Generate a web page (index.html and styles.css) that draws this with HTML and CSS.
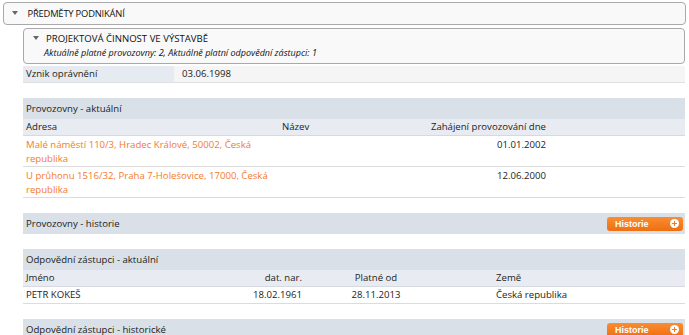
FILE: index.html
```html
<!DOCTYPE html>
<html>
<head>
  <title>Předměty podnikání</title>
  <link rel="stylesheet" href="styles.css">
</head>
<body>
  <div class="panel-head">
    <span class="caret"></span>
    <span class="panel-title">PŘEDMĚTY PODNIKÁNÍ</span>
  </div>

  <div class="panel-body">
    <div class="sub-head">
      <div class="sub-title"><span class="caret"></span>PROJEKTOVÁ ČINNOST VE VÝSTAVBĚ</div>
      <div class="sub-note">Aktuálně platné provozovny: 2, Aktuálně platní odpovědní zástupci: 1</div>
    </div>

    <div class="info-row">
      <div class="info-label">Vznik oprávnění</div>
      <div class="info-value">03.06.1998</div>
    </div>

    <!-- Provozovny - aktualni -->
    <div class="section">
      <div class="section-head">Provozovny - aktuální</div>
      <div class="grid grid-prov col-head">
        <div>Adresa</div>
        <div>Název</div>
        <div class="right">Zahájení provozování dne</div>
        <div></div>
      </div>
      <div class="grid grid-prov data-row">
        <div class="link">Malé náměstí 110/3, Hradec Králové, 50002, Česká republika</div>
        <div></div>
        <div class="right">01.01.2002</div>
        <div></div>
      </div>
      <div class="grid grid-prov data-row">
        <div class="link">U průhonu 1516/32, Praha 7-Holešovice, 17000, Česká republika</div>
        <div></div>
        <div class="right">12.06.2000</div>
        <div></div>
      </div>
    </div>

    <div class="section">
      <div class="section-head">
        <span>Provozovny - historie</span>
        <span class="btn-history">Historie<span class="btn-plus"></span></span>
      </div>
    </div>

    <!-- Odpovedni zastupci - aktualni -->
    <div class="section">
      <div class="section-head">Odpovědní zástupci - aktuální</div>
      <div class="grid grid-rep col-head">
        <div>Jméno</div>
        <div class="right">dat. nar.</div>
        <div class="center">Platné od</div>
        <div></div>
        <div>Země</div>
      </div>
      <div class="grid grid-rep data-row">
        <div>PETR KOKEŠ</div>
        <div class="right">18.02.1961</div>
        <div class="center">28.11.2013</div>
        <div></div>
        <div>Česká republika</div>
      </div>
    </div>

    <div class="section">
      <div class="section-head">
        <span>Odpovědní zástupci - historické</span>
        <span class="btn-history">Historie<span class="btn-plus"></span></span>
      </div>
    </div>
  </div>
</body>
</html>
```

FILE: styles.css
```css
/* Base page */
body {
  margin: 0;
  padding: 2px 3px 0 3px;
  font-family: "Open Sans", Arial, sans-serif;
  font-size: 9.6px;
  color: #222;
  background-color: #fff;
}

/* Small down arrow used in panel heads */
.caret {
  display: inline-block;
  width: 0;
  height: 0;
  border-left: 3px solid transparent;
  border-right: 3px solid transparent;
  border-top: 4px solid #666;
  margin-right: 7px;
  vertical-align: 2px;
}

/* Top level panel head */
.panel-head {
  height: 21px;
  line-height: 21px;
  padding-left: 8px;
  border: 1px solid #a9a9a9;
  border-radius: 4px;
  background-color: #f9f9f9;
}

.panel-title {
  font-size: 9.4px;
  letter-spacing: -0.2px;
  color: #111;
}

/* Content under the top panel */
.panel-body {
  margin: 3px 1px 0 20px;
}

.sub-head {
  height: 34px;
  padding-left: 9px;
  border: 1px solid #a9a9a9;
  border-radius: 4px;
  background-color: #f9f9f9;
}

.sub-title {
  font-size: 9.6px;
  color: #111;
  line-height: 14px;
  margin-top: 3px;
}

.sub-note {
  font-style: italic;
  font-size: 9px;
  color: #111;
  padding-left: 11px;
  line-height: 13px;
}

/* Label / value row */
.info-row {
  display: flex;
  margin-top: 2px;
  height: 16px;
  line-height: 16px;
  border-bottom: 1px solid #e0e0e0;
}

.info-label {
  width: 148px;
  padding-left: 3px;
  background-color: #e6ebf2;
}

.info-value {
  flex: 1;
  padding-left: 8px;
  background-color: #f5f5f5;
}

/* Sections */
.section {
  margin-top: 15px;
}

.section-head {
  display: flex;
  justify-content: space-between;
  align-items: center;
  height: 21px;
  padding: 0 2px 0 3px;
  background-color: #dae0e7;
}

/* Tables built from grid rows */
.grid {
  display: grid;
}

.grid > div {
  padding: 0 3px;
}

.grid-prov {
  grid-template-columns: 256px 140px 130px 1fr;
}

.grid-rep {
  grid-template-columns: 177px 105px 142px 46px 1fr;
}

.col-head {
  height: 16px;
  line-height: 16px;
  background-color: #e8ecf2;
  border-bottom: 1px solid #d6dae0;
}

.data-row {
  height: 16px;
  line-height: 16px;
  border-bottom: 1px solid #dcdcdc;
}

.grid-prov.data-row {
  height: 28px;
  padding-top: 2px;
  line-height: 14px;
}

.right {
  text-align: right;
}

.center {
  text-align: center;
}

.link {
  color: #f47b2c;
}

/* Orange history button */
.btn-history {
  display: flex;
  align-items: center;
  justify-content: space-between;
  width: 64px;
  height: 14px;
  padding: 0 4px 0 8px;
  border-radius: 3px;
  background: linear-gradient(#f98d32, #ef6f10);
  color: #fff;
  font-family: Arial, "Liberation Sans", sans-serif;
  font-size: 9px;
  font-weight: bold;
}

.btn-plus {
  position: relative;
  width: 9px;
  height: 9px;
  border-radius: 50%;
  background-color: #fff;
}

.btn-plus::before,
.btn-plus::after {
  content: "";
  position: absolute;
  background-color: #f27a1e;
}

.btn-plus::before {
  left: 2px;
  top: 4px;
  width: 5px;
  height: 1px;
}

.btn-plus::after {
  left: 4px;
  top: 2px;
  width: 1px;
  height: 5px;
}
```
